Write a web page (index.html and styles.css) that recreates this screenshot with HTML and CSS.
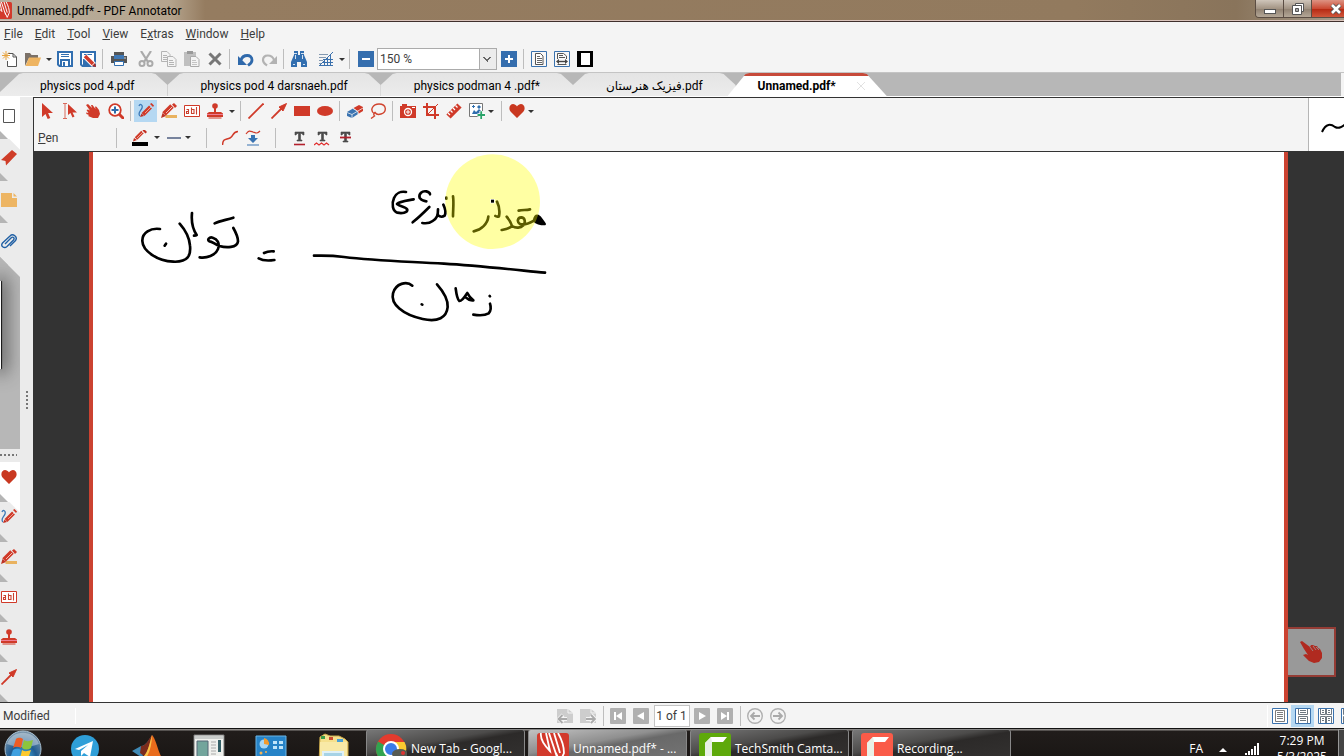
FILE: index.html
```html
<!DOCTYPE html>
<html lang="en">
<head>
<meta charset="utf-8">
<title>Unnamed.pdf* - PDF Annotator</title>
<link rel="stylesheet" href="styles.css">
</head>
<body>
<svg class="defs" aria-hidden="true">
  <symbol id="logo" viewBox="0 0 32 32"><rect width="32" height="32" rx="3" fill="#d23a2c"/><path d="M4 0c-1 6 2 11 9 18L9 0M12 0l8 24M17 0l6 20M19 20l4 9 4-9c0-6-2-13-6-20" fill="none" stroke="#fff" stroke-width="1.800"/></symbol>
  <symbol id="new" viewBox="0 0 16 16"><path d="M6 2.500h5l3.500 3.500v9.500h-9V10M11 2.500V6h3.500" fill="#fff" stroke="#555"/><path d="M4 0v9M0 4.500h8M1 1.500l6 6M7 1.500l-6 6" stroke="#e8a33c"/></symbol>
  <symbol id="open" viewBox="0 0 18 16"><path d="M1 15V2h5l1.500 2H14v3H5z" fill="#7b7168"/><path d="M5 6.500h12L14 15H1.500z" fill="#eeb461"/></symbol>
  <symbol id="save" viewBox="0 0 16 16"><path d="M1 1h14v14H2.500L1 13.500z" fill="#fff" stroke="#326fb0" stroke-width="2"/><path d="M3 8h10v8H3z" fill="#326fb0"/><path d="M4 3.500h8M4 5.500h8" stroke="#326fb0"/><path d="M5 10h6v5H5z" fill="#fff"/><path d="M6 11h2v4H6z" fill="#326fb0"/></symbol>
  <symbol id="saveas" viewBox="0 0 16 16"><path d="M1 1h14v14H2.500L1 13.500z" fill="#fff" stroke="#326fb0" stroke-width="2"/><path d="M3 8h4l3 4v3H3z" fill="#326fb0"/><path d="M4 3.500h8" stroke="#326fb0"/><path d="M5 5l9 9" stroke="#fff" stroke-width="5.500"/><path d="M5 5l8 8" stroke="#d03b2b" stroke-width="3.600"/><path d="M12 15l4 1-1-4z" fill="#b02a20"/></symbol>
  <symbol id="print" viewBox="0 0 16 16"><path d="M3 1h10v4H3z" fill="#555"/><path d="M0 5h16v7H0z" fill="#555"/><path d="M3 4h10v4H3z" fill="#3f78b5"/><path d="M3.500 10.500h9v4h-9z" fill="#fff" stroke="#326fb0"/><circle cx="14" cy="7" r=".7" fill="#fff"/></symbol>
  <symbol id="cut" viewBox="0 0 16 16"><path d="M3 0l7 11M13 0L6 11" stroke="#aaa" stroke-width="2.200"/><g fill="none" stroke="#aaa" stroke-width="2"><circle cx="4" cy="12.500" r="2.500"/><circle cx="12" cy="12.500" r="2.500"/></g></symbol>
  <symbol id="copy" viewBox="0 0 16 16"><g fill="#f4f4f4" stroke="#b4b4b4"><path d="M.5.500H6l3 3v7H.500zM2 4.500h4M2 6.500h5M2 8.500h5"/><path d="M6.500 5.500H12l3 3v7H6.500zM8 9.500h4M8 11.500h5M8 13.500h5"/></g></symbol>
  <symbol id="paste" viewBox="0 0 16 16"><path d="M0 1h12v14H0z" fill="#c0c0c0"/><path d="M3 0h6v3H3z" fill="#999"/><path d="M6.500 5.500H12l3 3v7H6.500z" fill="#f4f4f4" stroke="#aaa"/><path d="M8 9.500h4M8 11.500h5M8 13.500h5" stroke="#c4c4c4"/></symbol>
  <symbol id="del" viewBox="0 0 16 16"><path d="M2.500 2.500l11 11M13.500 2.500l-11 11" stroke="#777" stroke-width="3"/></symbol>
  <symbol id="undo" viewBox="0 0 16 16"><path d="M3 9c2-6 11-6 11 0 0 3-2 4-4 5.500" fill="none" stroke="#2f69ab" stroke-width="2.800"/><path d="M0 5v9h9z" fill="#2f69ab"/></symbol>
  <symbol id="redo" viewBox="0 0 16 16"><path d="M13 9C11 3 2 3 2 9c0 3 2 4 4 5.500" fill="none" stroke="#b3b3b3" stroke-width="2.200"/><path d="M16 5v8H8z" fill="#b3b3b3"/></symbol>
  <symbol id="find" viewBox="0 0 16 16"><path d="M3 0h4v4h2V0h4v4l3 7v5h-6v-5H6v5H0v-5l3-7z" fill="#326fb0"/><path d="M4.500 4v4M11.500 4v4M2 13.500h2M12 13.500h2M3 2.500h3M10 2.500h3" stroke="#fff" stroke-width=".8"/></symbol>
  <symbol id="grid" viewBox="0 0 16 16"><path d="M1 3.500h9M1 6.500h7M1 9.500h4M1 12.500h3" stroke="#8298b0"/><path d="M6.500 10v5M9.500 7v8M12.500 4v11M5 8.500h10M4 11.500h11M2 14.500h13M15 1L1 15" stroke="#3b71ad"/></symbol>
  <symbol id="minus" viewBox="0 0 16 16"><rect width="16" height="16" fill="#356eae"/><path d="M4 8h8" stroke="#fff" stroke-width="2"/></symbol>
  <symbol id="plus" viewBox="0 0 16 16"><rect width="16" height="16" fill="#356eae"/><path d="M4 8h8M8 4v8" stroke="#fff" stroke-width="2"/></symbol>
  <symbol id="page" viewBox="0 0 16 16"><path d="M.5.500h15v15H.500z" fill="#f8f8f8" stroke="#3a72ae"/><path d="M4.500 2.500h5l2.500 2.500v8.500H4.500z" fill="#fff" stroke="#555"/><path d="M6 5.500h3M6 7.500h5M6 9.500h5M6 11.500h5" stroke="#666"/></symbol>
  <symbol id="pagew" viewBox="0 0 16 16"><path d="M.5.500h15v15H.500z" fill="#f8f8f8" stroke="#3a72ae"/><path d="M3.500 8V2.500h6l3 2.500V8M5 4.500h4M5 6.500h6M3.500 13.500h9" fill="none" stroke="#555"/><path d="M4 10.500h8" stroke="#444" stroke-width="1.400"/><path d="M2 10.500L5 8v5zM14 10.500L11 8v5z" fill="#444"/></symbol>
  <symbol id="full" viewBox="0 0 16 16"><rect width="16" height="16" fill="#000"/><rect x="4" y="2" width="9" height="12" fill="#fff"/></symbol>
  <symbol id="select" viewBox="0 0 16 16"><path d="M3 0v14l3.500-3 2.200 5 2.600-1-2.200-5H14z" fill="#d03a29"/></symbol>
  <symbol id="seltext" viewBox="0 0 16 16"><path d="M1 .500h4M1 15.500h4M3 1v14" stroke="#d86a5c" fill="none"/><path d="M6 1v11l2.500-2 2 4.500 2-1-2-4H15z" fill="#d03a29"/></symbol>
  <symbol id="hand" viewBox="0 0 16 16"><path d="M1 2l2-1 4 4-1-3h1.500l3 4-.5-2.500 1.500.200L14 7l1 4-2 4H8L3 13l1-1-2.500-1L1 9.500 3.500 10 1.500 7 3 6.500l2 1z" fill="#d03a29"/></symbol>
  <symbol id="zoom" viewBox="0 0 16 16"><circle cx="7" cy="7" r="5.800" fill="#fff" stroke="#d03a29" stroke-width="1.800"/><path d="M11 11l5 5" stroke="#d03a29" stroke-width="3"/><path d="M3.500 7h7M7 3.500v7" stroke="#2e6baa" stroke-width="2"/></symbol>
  <symbol id="pen" viewBox="0 0 16 16"><path d="M1 3C2 0 5 2 4 5S-1 10 2 13" fill="none" stroke="#3b79b8" stroke-width="1.300"/><path d="M5 11.500L12.500 4" stroke="#d03a29" stroke-width="4"/><path d="M12 1l1.500-1L16 2.500 15 4z" fill="#d03a29"/><path d="M3.500 10.500L2 14l4-1z" fill="#c22e20"/><path d="M7 10l6-6" stroke="#f0b9ad" stroke-width=".8"/></symbol>
  <symbol id="marker" viewBox="0 0 16 16"><path d="M4.500 15v-3H16v3z" fill="#e9b25f"/><path d="M3 11L11 3" stroke="#d03a29" stroke-width="5"/><path d="M11 1.500L13 0l3 3-2 2z" fill="#d03a29"/><path d="M1.500 10L0 15l5-2z" fill="#be3325"/><path d="M5 10l6-6" stroke="#f0c0b6"/></symbol>
  <symbol id="abl" viewBox="0 0 16 16"><path d="M.5 2.500h15v11H.500z" fill="#fff" stroke="#d03a29"/><path d="M2.500 6.500h2v4h-2v-2h2M7.500 4.500v6h2.500v-4H7.500M12.500 4v7.500" fill="none" stroke="#c9412f" stroke-width="1.100"/></symbol>
  <symbol id="stamp" viewBox="0 0 16 16"><circle cx="8" cy="3" r="2.800" fill="#d03a29"/><path d="M7 5h2v4h5l2 1.500V14H0v-3.500L2 9h5z" fill="#d03a29"/><path d="M0 11.500h16" stroke="#ee7d94"/><path d="M1.500 15h13" stroke="#d03a29"/></symbol>
  <symbol id="line" viewBox="0 0 16 16"><path d="M.5 15.500l15-15" stroke="#d03a29" stroke-width="1.800"/></symbol>
  <symbol id="arrow" viewBox="0 0 16 16"><path d="M.5 15.500L12 4" stroke="#d03a29" stroke-width="1.800"/><path d="M15.500.500L8 4l4 4z" fill="#d03a29" stroke="#d03a29"/></symbol>
  <symbol id="rect" viewBox="0 0 16 16"><rect y="3" width="16" height="10" fill="#d03a29"/></symbol>
  <symbol id="ell" viewBox="0 0 16 16"><ellipse cx="8" cy="8" rx="8" ry="5" fill="#d03a29"/></symbol>
  <symbol id="eraser" viewBox="0 0 16 16"><path d="M0 9l6-3.500 5 3V11l-6 4-5-2z" fill="#3a73b1"/><path d="M6.500 5L12 2l4 2v4l-4.500 2.700-.5-2.200z" fill="#d03a29"/><path d="M0 9.500l5 2 11-6.500M6 5.500l5 3v2.500M5 11.500V15" fill="none" stroke="#f3f3f3" stroke-width=".8"/></symbol>
  <symbol id="lasso" viewBox="0 0 16 16"><path d="M4.500 11C-1 7 3 1 9 1c8 0 8 8 2 10-3 1-5 0-6-1.500-2 1-1 3-.500 3.500L1 15.500" fill="none" stroke="#d0442f" stroke-width="1.400"/></symbol>
  <symbol id="camera" viewBox="0 0 16 16"><path d="M0 3h2V1h5v2h9v12H0z" fill="#d03a29"/><circle cx="8" cy="9" r="3.500" fill="#d03a29" stroke="#fff" stroke-width="1.300"/><path d="M8 7v4M6 9h4M12 4.500h3" stroke="#fff"/></symbol>
  <symbol id="crop" viewBox="0 0 16 16"><path d="M4 0v12h12M0 4h12v12" fill="none" stroke="#d03a29" stroke-width="2"/><path d="M5 11L15 1" stroke="#d03a29"/></symbol>
  <symbol id="ruler" viewBox="0 0 16 16"><path d="M2.500 13.500l11-11" stroke="#d03a29" stroke-width="6"/><path d="M2 10l2 2M4.500 7.500l2 2M7 5l2 2M9.500 2.500l2 2" stroke="#fff" stroke-width="1.200"/></symbol>
  <symbol id="addimg" viewBox="0 0 16 16"><path d="M1 .500h12.500v13H.500V.500z" fill="#fff" stroke="#777"/><path d="M3 11l2-4 2 2 3-3 2 2v3z" fill="#2f6eae"/><path d="M3 3.500h3M4.500 2v3M9 3h2v2H9z" stroke="#2f6eae" fill="#2f6eae"/><path d="M8.500 12h7.500M12.200 8v8" stroke="#fff" stroke-width="3.500"/><path d="M8.500 12H16M12.200 8.300V16" stroke="#2ba36a" stroke-width="1.800"/></symbol>
  <symbol id="heart" viewBox="0 0 16 16"><path d="M8 15L1.500 8.500C-1 5 1 1 4.200 1 6.500 1 8 3.500 8 3.500S9.500 1 11.800 1C15 1 17 5 14.500 8.500z" fill="#c93820"/></symbol>
  <symbol id="pencolor" viewBox="0 0 16 16"><path d="M4 8.500l6.500-6.500" stroke="#d03a29" stroke-width="3.600"/><path d="M2 8L1 11.500l4-1.500zM10.500.500L12-1l3 3-1.500 1.500z" fill="#c22e20"/><path d="M5 8l6-6" stroke="#f0b9ad" stroke-width=".8"/><rect y="12" width="16" height="4" fill="#000"/></symbol>
  <symbol id="dash" viewBox="0 0 16 16"><path d="M1 8h14" stroke="#34466e" stroke-width="1.300"/></symbol>
  <symbol id="curve" viewBox="0 0 16 16"><path d="M.5 15C1 8 4 10 8 8s2-6 8-6.500" fill="none" stroke="#d03a29" stroke-width="1.500"/></symbol>
  <symbol id="press" viewBox="0 0 16 16"><path d="M1 4c3-4 4-3 7-2s4 2 7-1" fill="none" stroke="#d03a29" stroke-width="1.200"/><path d="M6 5h4v3h3l-5 5-5-5h3z" fill="#3972b1"/><path d="M2 15h12" stroke="#3972b1"/></symbol>
  <symbol id="tu" viewBox="0 0 16 16"><path d="M4 5V2h9v3h-1l-1-1.500H9.500V10H11v1H6v-1h1.500V3.500H6L5 5z" fill="#4a4a4a" stroke="#4a4a4a" stroke-width=".6"/><path d="M3 14.500h11" stroke="#b3202c" stroke-width="1.600"/></symbol>
  <symbol id="tw" viewBox="0 0 16 16"><path d="M4 5V2h9v3h-1l-1-1.500H9.500V10H11v1H6v-1h1.500V3.500H6L5 5z" fill="#4a4a4a" stroke="#4a4a4a" stroke-width=".6"/><path d="M0 15l2.500-2L5 15l2.500-2 2.500 2 2.500-2 2.500 2" fill="none" stroke="#e02d2d" stroke-width="1.200"/></symbol>
  <symbol id="ts" viewBox="0 0 16 16"><path d="M4 5V2h9v3h-1l-1-1.500H9.500V11H11v1H6v-1h1.500V3.500H6L5 5z" fill="#4a4a4a" stroke="#4a4a4a" stroke-width=".6"/><path d="M3 7.500h11" stroke="#b3202c" stroke-width="1.800"/></symbol>
  <symbol id="sheet" viewBox="0 0 16 16"><path d="M2.500 1.500h11v13h-11z" fill="#fff" stroke="#555"/></symbol>
  <symbol id="bookmark" viewBox="0 0 16 16"><path d="M0 10L11 0l5 4L5 15.500 4.500 11z" fill="#cf3d28"/></symbol>
  <symbol id="note" viewBox="0 0 16 16"><path d="M0 1h11v5h5v9H0z" fill="#edb563"/><path d="M12.500 1L16 4.500h-3.500z" fill="#edb563"/></symbol>
  <symbol id="clip" viewBox="0 0 16 16"><path d="M4 10l6-6c2-2 4 0 2.500 2L6 12.500C3 15-1 12 1.500 9L9 2c3-3 8 1 5.500 4.500L9 12" fill="none" stroke="#2160a4" stroke-width="1.400"/></symbol>
  <symbol id="docl" viewBox="0 0 16 16"><path d="M0 1h11l5 4v10H0z" fill="#cdcdcd"/><path d="M11 1v4h5" fill="none" stroke="#f4f4f4"/><path d="M2 11h8M6 7l-4 4 4 4" fill="none" stroke="#f4f4f4" stroke-width="4"/><path d="M1 11h9M5.500 7l-4 4 4 4" fill="none" stroke="#aaa" stroke-width="1.800"/></symbol>
  <symbol id="docr" viewBox="0 0 16 16"><path d="M0 1h11l5 4v10H0z" fill="#cdcdcd"/><path d="M11 1v4h5" fill="none" stroke="#f4f4f4"/><path d="M6 11h8M11 7l4 4-4 4" fill="none" stroke="#f4f4f4" stroke-width="4"/><path d="M6 11h9M11 7l4 4-4 4" fill="none" stroke="#aaa" stroke-width="1.800"/></symbol>
  <symbol id="first" viewBox="0 0 16 16"><rect width="16" height="16" rx="1" fill="#b0b0b0"/><path d="M4 4h2v8H4zM12 4v8L6 8z" fill="#fff"/></symbol>
  <symbol id="prev" viewBox="0 0 16 16"><rect width="16" height="16" rx="1" fill="#b0b0b0"/><path d="M11 4v8L4 8z" fill="#fff"/></symbol>
  <symbol id="next" viewBox="0 0 16 16"><rect width="16" height="16" rx="1" fill="#b0b0b0"/><path d="M5 4v8l7-4z" fill="#fff"/></symbol>
  <symbol id="last" viewBox="0 0 16 16"><rect width="16" height="16" rx="1" fill="#b0b0b0"/><path d="M10 4h2v8h-2zM4 4v8l6-4z" fill="#fff"/></symbol>
  <symbol id="back" viewBox="0 0 16 16"><circle cx="8" cy="8" r="7.300" fill="none" stroke="#b0b0b0" stroke-width="1.400"/><path d="M4 8h9M7.500 4.500L4 8l3.500 3.500" fill="none" stroke="#aaa" stroke-width="1.800"/></symbol>
  <symbol id="fwd" viewBox="0 0 16 16"><circle cx="8" cy="8" r="7.300" fill="none" stroke="#b0b0b0" stroke-width="1.400"/><path d="M3 8h9M8.500 4.500L12 8l-3.500 3.500" fill="none" stroke="#aaa" stroke-width="1.800"/></symbol>
  <symbol id="vpage" viewBox="0 0 16 16"><path d="M.5.500h15v15H.500z" fill="#fff" stroke="#3a72ae"/><path d="M3.500 2.500h9v11h-9zM5 4.500h6M5 6.500h6M5 8.500h6M5 10.500h6" fill="none" stroke="#7d7d7d"/></symbol>
  <symbol id="vcont" viewBox="0 0 16 16"><path d="M.5.500h15v15H.500z" fill="#fff" stroke="#3a72ae"/><path d="M3.500 1v5.500h9V1M5 2.500h6M5 4.500h6M3.500 15V8.500h9V15M5 10.500h6M5 12.500h6" fill="none" stroke="#6d7780"/></symbol>
  <symbol id="vtwo" viewBox="0 0 16 16"><path d="M.5.500h15v15H.500z" fill="#fff" stroke="#3a72ae"/><path d="M2.500 1v5.500h5V1M8.500 1v5.500h5V1M4 2.500h2M4 4.500h2M10 2.500h2M10 4.500h2M2.500 15V8.500h5V15M8.500 15V8.500h5V15M4 10.500h2M4 12.500h2M10 10.500h2M10 12.500h2" fill="none" stroke="#6d7780"/></symbol>
  <symbol id="camtasia" viewBox="0 0 32 32"><path d="M12 4h16l-4 5H13v15h11l4 5H6V10z" fill="#fff"/><path d="M6 10l6-6 1 5v15l-7 3z" fill="#e9f0e6"/></symbol>
  <symbol id="point" viewBox="0 0 24 24"><path d="M1 2l2-1 8 6 1-2 2 0 2 1 2 0 1 2 2 1 2 4 0 5-3 4-5 1-5-2-6-6 3-1 2 1-4-6z" fill="#b02a20"/><path d="M11 7l3 4M14 6l3 4M17 7l3 3" stroke="#999" stroke-width=".8"/></symbol>
</svg>

<header class="titlebar">
  <svg class="app-icon"><use href="#logo"/></svg>
  <h1 class="title">Unnamed.pdf* - PDF Annotator</h1>
  <div class="winctl">
    <button class="wbtn" aria-label="Minimize"><svg viewBox="0 0 14 12"><rect x="1.500" y="6.500" width="11" height="4" fill="#fff" stroke="#555"/></svg></button>
    <button class="wbtn" aria-label="Restore"><svg viewBox="0 0 14 12"><path d="M4.500.500h8v8h-8z" fill="#fff" stroke="#555"/><path d="M1.500 2.500h9v9h-9z" fill="#fff" stroke="#555"/><path d="M4.500 5.500h3v3h-3z" fill="#aaa" stroke="#555"/></svg></button>
    <button class="wbtn close" aria-label="Close"><svg viewBox="0 0 14 12"><path d="M3 2l8 8M11 2l-8 8" stroke="#555" stroke-width="4.500"/><path d="M3 2l8 8M11 2l-8 8" stroke="#fff" stroke-width="2.600"/></svg></button>
  </div>
</header>

<nav class="menubar">
  <button><u>F</u>ile</button><button><u>E</u>dit</button><button><u>T</u>ool</button><button><u>V</u>iew</button><button>E<u>x</u>tras</button><button><u>W</u>indow</button><button><u>H</u>elp</button>
</nav>

<div class="toolbar main-tools">
  <button class="ib" aria-label="New"><svg><use href="#new"/></svg></button>
  <button class="ib" aria-label="Open"><svg class="wide"><use href="#open"/></svg></button>
  <button class="caret" aria-label="Recent files"></button>
  <button class="ib" aria-label="Save"><svg><use href="#save"/></svg></button>
  <button class="ib" aria-label="Save as"><svg><use href="#saveas"/></svg></button>
  <i class="sep"></i>
  <button class="ib" aria-label="Print"><svg><use href="#print"/></svg></button>
  <i class="gap"></i>
  <button class="ib" aria-label="Cut"><svg><use href="#cut"/></svg></button>
  <button class="ib" aria-label="Copy"><svg><use href="#copy"/></svg></button>
  <button class="ib" aria-label="Paste"><svg><use href="#paste"/></svg></button>
  <button class="ib" aria-label="Delete"><svg><use href="#del"/></svg></button>
  <i class="sep"></i>
  <button class="ib" aria-label="Undo"><svg><use href="#undo"/></svg></button>
  <button class="ib" aria-label="Redo"><svg><use href="#redo"/></svg></button>
  <i class="sep tight"></i>
  <button class="ib" aria-label="Find"><svg><use href="#find"/></svg></button>
  <i class="gap"></i>
  <button class="ib" aria-label="Grid"><svg><use href="#grid"/></svg></button>
  <button class="caret" aria-label="Grid options"></button>
  <i class="sep"></i>
  <button class="ib" aria-label="Zoom out"><svg><use href="#minus"/></svg></button>
  <select class="zoombox" aria-label="Zoom"><option>150 %</option></select>
  <button class="ib" aria-label="Zoom in"><svg><use href="#plus"/></svg></button>
  <i class="sep tight"></i>
  <button class="ib" aria-label="Full page"><svg><use href="#page"/></svg></button>
  <button class="ib" aria-label="Page width"><svg><use href="#pagew"/></svg></button>
  <button class="ib" aria-label="Full screen"><svg><use href="#full"/></svg></button>
</div>

<div class="tabs" role="tablist">
  <button class="tab" role="tab">physics pod 4.pdf</button>
  <button class="tab" role="tab">physics pod 4 darsnaeh.pdf</button>
  <button class="tab" role="tab">physics podman 4 .pdf*</button>
  <button class="tab" role="tab"><bdi dir="rtl">فیزیک هنرستان</bdi>.pdf</button>
  <button class="tab active" role="tab" aria-selected="true">Unnamed.pdf*<svg class="tabx" viewBox="0 0 8 8"><path d="M0 0l8 8M8 0L0 8" stroke="#e2e2e2"/></svg></button>
  <i class="tab-end"></i>
</div>

<div class="workspace">
  <aside class="sidebar">
    <div class="strip tall">
      <button class="side on" aria-label="Pages"><svg><use href="#sheet"/></svg></button>
      <button class="side" aria-label="Bookmarks"><svg><use href="#bookmark"/></svg></button>
      <button class="side" aria-label="Notes"><svg><use href="#note"/></svg></button>
      <button class="side" aria-label="Attachments"><svg><use href="#clip"/></svg></button>
    </div>
    <div class="panel"><i class="thumb"></i></div>
    <i class="grip-h"></i>
    <div class="strip">
      <button class="side on" aria-label="Favorites"><svg><use href="#heart"/></svg></button>
      <button class="side" aria-label="Pens"><svg><use href="#pen"/></svg></button>
      <button class="side" aria-label="Markers"><svg><use href="#marker"/></svg></button>
      <button class="side" aria-label="Text boxes"><svg><use href="#abl"/></svg></button>
      <button class="side" aria-label="Stamps"><svg><use href="#stamp"/></svg></button>
      <button class="side" aria-label="Arrows"><svg><use href="#arrow"/></svg></button>
    </div>
    <i class="grip-v"></i>
  </aside>

  <main class="editor">
    <div class="toolbox">
      <div class="toolrows">
        <div class="toolbar">
          <button class="ib" aria-label="Select"><svg><use href="#select"/></svg></button>
          <button class="ib" aria-label="Select text"><svg><use href="#seltext"/></svg></button>
          <button class="ib" aria-label="Pan"><svg><use href="#hand"/></svg></button>
          <button class="ib" aria-label="Zoom tool"><svg><use href="#zoom"/></svg></button>
          <i class="sep"></i>
          <button class="ib on" aria-label="Pen"><svg><use href="#pen"/></svg></button>
          <button class="ib" aria-label="Marker"><svg><use href="#marker"/></svg></button>
          <button class="ib" aria-label="Text box"><svg><use href="#abl"/></svg></button>
          <button class="ib" aria-label="Stamp"><svg><use href="#stamp"/></svg></button>
          <button class="caret" aria-label="Stamp options"></button>
          <i class="sep"></i>
          <button class="ib" aria-label="Line"><svg><use href="#line"/></svg></button>
          <button class="ib" aria-label="Arrow"><svg><use href="#arrow"/></svg></button>
          <button class="ib" aria-label="Rectangle"><svg><use href="#rect"/></svg></button>
          <button class="ib" aria-label="Ellipse"><svg><use href="#ell"/></svg></button>
          <i class="sep"></i>
          <button class="ib" aria-label="Eraser"><svg><use href="#eraser"/></svg></button>
          <button class="ib" aria-label="Lasso"><svg><use href="#lasso"/></svg></button>
          <i class="sep"></i>
          <button class="ib" aria-label="Snapshot"><svg><use href="#camera"/></svg></button>
          <button class="ib" aria-label="Crop"><svg><use href="#crop"/></svg></button>
          <button class="ib" aria-label="Measure"><svg><use href="#ruler"/></svg></button>
          <button class="ib" aria-label="Insert image"><svg><use href="#addimg"/></svg></button>
          <button class="caret near" aria-label="Image options"></button>
          <i class="gap"></i>
          <i class="sep"></i>
          <button class="ib" aria-label="Favorites"><svg><use href="#heart"/></svg></button>
          <button class="caret near" aria-label="Favorite options"></button>
        </div>
        <div class="toolbar props">
          <span class="toolname"><u>P</u>en</span>
          <i class="sep"></i>
          <i class="gap"></i>
          <button class="ib" aria-label="Color"><svg><use href="#pencolor"/></svg></button>
          <button class="caret" aria-label="Color options"></button>
          <button class="ib" aria-label="Line style"><svg><use href="#dash"/></svg></button>
          <button class="caret near" aria-label="Line options"></button>
          <i class="gap wide"></i><i class="sep"></i><i class="gap"></i>
          <button class="ib" aria-label="Smooth"><svg><use href="#curve"/></svg></button>
          <button class="ib" aria-label="Pressure"><svg><use href="#press"/></svg></button>
          <i class="gap"></i><i class="sep"></i><i class="gap"></i>
          <button class="ib" aria-label="Underline"><svg><use href="#tu"/></svg></button>
          <button class="ib" aria-label="Squiggle"><svg><use href="#tw"/></svg></button>
          <button class="ib" aria-label="Strike through"><svg><use href="#ts"/></svg></button>
        </div>
      </div>
      <div class="preview"><svg viewBox="0 0 35 53"><path d="M13 34c4-9 9-8 13-5 4 2 7 0 12-4" fill="none" stroke="#000" stroke-width="2"/></svg></div>
    </div>

    <div class="canvas">
      <div class="page">
        <svg class="ink" viewBox="0 0 1350 570" role="img" aria-label="توان = مقدار انرژی / زمان">
          <g fill="none" stroke="#000" stroke-width="8" stroke-linecap="round" stroke-linejoin="round">
            <path d="M120 237C92 233 66 248 67 273c1 30 45 60 93 62 45 2 53-20 50-48-2-25-15-48-31-66M138 281l-4 6"/>
            <path d="M216 189c-2 20 2 48 14 66-2 2-5 2-8 2M284 220c18-9 36-10 56-17M340 234c8 14 14 28 14 40-2 20-36 20-56 14-12-4-22-14-30-14-8-4 0-14 10-11 14 4 22 16 16 34-8 20-34 28-55 25"/>
            <path d="M432 309c8-4 17-6 29-5M416 325c10 6 27 8 47 5"/>
            <path d="M582 317c35-1 61 0 90 4 90 11 180 13 300 20 100 6 200 17 303 27"/>
            <path d="M858 126c-16-3-30 4-36 18-8 18-4 40 10 44 14 3 30 0 30-8-1-10-20-8-31-18 8-8 30-10 50-14"/>
            <path d="M899 144c-4-14 8-22 20-20 8 2 11 6 11 9M899 144c6 7 14 10 20 10M928 171c-14 14-30 30-50 46M954 178c0 18-2 26-16 35-8 6-18 8-31 6M979 143l0 3M970 164c6 12 8 24 4 33-6 4-14 4-20-1M999 139c3 18 0 40 0 60"/>
            <path d="M1131 155c6 12 9 28 6 44-4 1-8 1-11-1M1105 200c-2 21-21 40-44 44M1160 200c10 12 14 20 16 28-8 8-20 10-31 12M1176 228c12 8 26 6 34-2 8-10 4-24-6-24-12 1-14 14-4 20 12 4 28-2 42-10M1196 182c12-3 22-1 34-4"/>
            <path d="M1242 212c2-12 6-16 12-14 8 4 12 14 20 24-12 0-24-3-32-10z" fill="#000"/>
            <path d="M877 407c-17-15-50-7-58 23-8 32 29 64 89 77 46 10 72-4 75-36 2-27-17-51-32-68M905 463l2 1"/>
            <path d="M1007 415c2 16 4 32 11 38 8 2 16-12 24-24 4 8 10 16 18 22-8 1-16-2-22-8M1109 438l1 1M1110 461c4 12 4 20-4 29-10 6-28 7-46 4"/>
          </g>
          <circle class="spot" cx="1118" cy="155" r="142"/>
          <rect x="1111" y="147" width="13" height="13" fill="#fff"/>
          <rect x="1113" y="149" width="9" height="9"/>
        </svg>
      </div>
      <button class="touch" aria-label="Pan by touch"><svg><use href="#point"/></svg></button>
    </div>
  </main>
</div>

<footer class="status">
  <span class="state">Modified</span>
  <div class="pager">
    <button class="ib" aria-label="Previous document"><svg><use href="#docl"/></svg></button>
    <button class="ib" aria-label="Next document"><svg><use href="#docr"/></svg></button>
    <i class="sep"></i>
    <button class="ib" aria-label="First page"><svg><use href="#first"/></svg></button>
    <button class="ib" aria-label="Previous page"><svg><use href="#prev"/></svg></button>
    <input class="pageno" aria-label="Page" value="1 of 1">
    <button class="ib" aria-label="Next page"><svg><use href="#next"/></svg></button>
    <button class="ib" aria-label="Last page"><svg><use href="#last"/></svg></button>
    <i class="sep"></i>
    <button class="ib" aria-label="Back"><svg><use href="#back"/></svg></button>
    <button class="ib" aria-label="Forward"><svg><use href="#fwd"/></svg></button>
  </div>
  <div class="views">
    <button class="ib" aria-label="Single page"><svg><use href="#vpage"/></svg></button>
    <button class="ib on" aria-label="Continuous"><svg><use href="#vcont"/></svg></button>
    <button class="ib" aria-label="Two pages"><svg><use href="#vtwo"/></svg></button>
    <button class="ib" aria-label="Two pages continuous"><svg><use href="#vtwo"/></svg></button>
  </div>
</footer>

<div class="taskbar">
  <div class="bar">
    <button class="launch orb" aria-label="Start"><svg viewBox="0 0 38 38"><defs><radialGradient id="og" cx=".5" cy=".75" r=".75"><stop offset="0" stop-color="#4bc0f2"/><stop offset=".5" stop-color="#205c92"/><stop offset="1" stop-color="#7f98ab"/></radialGradient></defs><circle cx="19" cy="19" r="18" fill="url(#og)" stroke="#a9c1d2"/><path d="M3 14c5-15 27-15 32 0-10 4-22 4-32 0z" fill="#dfe9f0" opacity=".45"/><path d="M12 9c3-2 5-1 7 0l-2 9c-3-2-6-1-8 0z" fill="#ee5b23"/><path d="M20 10c3 2 6 1 9 0l-2 8c-3 2-6 2-9 0z" fill="#8cc43c"/><path d="M9 20c3-2 6-1 8 0l-3 9c-2-2-5-2-8 0z" fill="#3fa0e0"/><path d="M18 20c3 2 6 1 9 0l-3 9c-3 2-6 1-8 0z" fill="#fcc92d"/></svg></button>
    <button class="launch" aria-label="Telegram"><svg viewBox="0 0 32 32"><circle cx="16" cy="16" r="14" fill="#2f9fd8"/><path d="M6 16l18-8-3 16-6-4-3 3v-5l7-6-9 5z" fill="#fff"/></svg></button>
    <button class="launch" aria-label="MATLAB"><svg viewBox="0 0 32 32"><path d="M1 18l9-5c5 0 7-6 12-11l-7 18-5 4z" fill="#3f8ab5"/><path d="M10 13c5 0 7-6 11-11 1 4-5 18-8 21l-4-3z" fill="#7c2b1c"/><path d="M21 2c4 4 6 17 11 25-4-3-6-5-9-2l-7 6-4-7c5-4 7-15 9-22z" fill="#e96c1c"/><path d="M21 2c0 9-2 17-6 23l-3-1c5-4 7-15 9-22z" fill="#f9c14a"/></svg></button>
    <button class="launch" aria-label="Viewer"><svg viewBox="0 0 32 32"><path d="M1 2h30v30H1z" fill="#f0f1ed" stroke="#777"/><path d="M2 3h28v3H2z" fill="#c9ccca"/><path d="M4 8h11v18H4z" fill="#72a59c" stroke="#567"/><path d="M18 9h5M18 12h5M18 15h5M18 18h5M18 21h5" stroke="#aaa"/><path d="M25 7h3v12h-3z" fill="#335f66"/></svg></button>
    <button class="launch" aria-label="Control panel"><svg viewBox="0 0 32 32"><path d="M1 3h30v29H1z" fill="#2683c7" stroke="#6ab5e5"/><circle cx="9" cy="11" r="4.500" fill="#a8d7f4"/><path d="M9 11V5a6 6 0 0 1 5 7z" fill="#f29b2d"/><path d="M18 8h4v3h-4zM24 8h4v3h-4zM18 13h4v3h-4zM24 13h4v3h-4zM12 24h16v2H12z" fill="#bfe5fa"/><circle cx="6" cy="20" r="1.500" fill="#f4b355"/><circle cx="11" cy="19" r="1" fill="#f4b355"/></svg></button>
    <button class="launch" aria-label="Explorer"><svg viewBox="0 0 32 32"><path d="M3 4l5-3 5 2h9l6 3 3 3v23H2z" fill="#f5e08c" stroke="#caa94b"/><path d="M3 9h27v23H3z" fill="#f8e9a6"/><path d="M4 3h4v3H4z" fill="#3b9b48"/><path d="M12 4h4v3h-4z" fill="#c94b30"/><path d="M20 6h6v3h-6z" fill="#49a0d7"/><path d="M6 19h20v13H6z" fill="#a7d3e6" stroke="#dff1f7" stroke-width="2"/></svg></button>
    <div class="tasks">
      <button class="task"><svg viewBox="0 0 32 32"><circle cx="16" cy="16" r="15" fill="#e33b2e"/><path d="M16 16L3 8.500A15 15 0 0 0 16 31z" fill="#31a350"/><path d="M16 16h15A15 15 0 0 1 16 31z" fill="#fccb30"/><path d="M16 9h13.500a15 15 0 0 1 0 14L16 31z" fill="#fccb30"/><circle cx="16" cy="16" r="7" fill="#3b7ce8" stroke="#fff" stroke-width="2"/><ellipse cx="25" cy="21" rx="8" ry="5" fill="#565a52"/><circle cx="28" cy="20" r="2" fill="#d33"/></svg><span>New Tab - Googl...</span></button>
      <button class="task current"><svg viewBox="0 0 32 32"><use href="#logo"/></svg><span>Unnamed.pdf* - ...</span></button>
      <button class="task"><svg class="green" viewBox="0 0 32 32"><use href="#camtasia"/></svg><span>TechSmith Camta...</span></button>
      <button class="task"><svg class="coral" viewBox="0 0 32 32"><use href="#camtasia"/></svg><span>Recording...</span></button>
    </div>
    <div class="tray">
      <span class="lang">FA</span>
      <svg class="up" viewBox="0 0 8 5"><path d="M0 5l4-4 4 4z" fill="#fff"/></svg>
      <svg class="signal" viewBox="0 0 16 12"><path d="M1 10h2v2H1zM4 8h2v4H4zM7 6h2v6H7zM10 3h2v9h-2zM13 0h2v12h-2z" fill="#fff"/></svg>
      <time class="clock">7:29 PM<br>5/3/2025</time>
      <i class="desk"></i>
    </div>
  </div>
</div>
</body>
</html>
```
FILE: styles.css
```css
* { box-sizing: border-box; }

body {
  margin: 0;
  height: 100vh;
  overflow: hidden;
  display: flex;
  flex-direction: column;
  background: #f4f4f4;
  color: #3c3c3c;
  font: 12px/16px Roboto, "Noto Sans", "DejaVu Sans", sans-serif;
}

button, input, select { font: inherit; color: inherit; }
button { border: 0; padding: 0; background: none; }
.defs { position: absolute; width: 0; height: 0; }

/* Title bar */
.titlebar {
  flex: none;
  height: 22px;
  display: flex;
  align-items: center;
  gap: 5px;
  overflow: hidden;
  border-bottom: 1px solid #40302c;
  box-shadow: inset 0 -1px #d9c3bb;
  background: linear-gradient(90deg, #b8b0a0 0, #b5a48d 170px, #957c60 205px, #927a5e 80%, #89745b 92%, #a79c8c 100%);
}
.app-icon { width: 17px; height: 17px; margin-left: -5px; }
.title { margin: 0; font-size: 12px; font-weight: 400; color: #000; flex: 1; }
.winctl { display: flex; align-self: flex-start; margin-right: -17px; border: 1px solid #5b4d43; border-top: 0; border-radius: 0 0 4px 4px; overflow: hidden; }
.wbtn { width: 28px; height: 17px; display: grid; place-items: center; border-right: 1px solid #5b4d43; background: linear-gradient(#cfc5ba, #a39484 50%, #8f8070 51%, #b4a797); }
.wbtn svg { width: 14px; height: 12px; }
.wbtn.close { width: 48px; background: linear-gradient(#dd9383, #cb4a34 50%, #b42711 51%, #d0573b); }

/* Menu */
.menubar { flex: none; height: 24px; display: flex; align-items: center; gap: 12px; padding-left: 4px; }

/* Toolbars */
.toolbar { display: flex; align-items: center; height: 26px; }
.main-tools { flex: none; margin-left: -2px; }
.ib { flex: none; width: 23px; height: 22px; display: grid; place-items: center; }
.ib svg { width: 16px; height: 16px; }
.ib svg.wide { width: 18px; }
.ib.on { background: #b5d8f2; }
.sep { flex: none; width: 7px; height: 20px; background: linear-gradient(90deg, transparent 3px, #bdbdbd 3px, #bdbdbd 4px, transparent 4px); }
.main-tools .sep { width: 8px; }
.main-tools .sep.tight { width: 7px; }
.gap { flex: none; width: 4px; }
.props .gap { width: 8px; }
.props .gap.wide { width: 12px; }
.caret { flex: none; width: 11px; height: 20px; display: grid; place-items: center; }
.caret.near { width: 6px; }
.caret::before { content: ""; border: 3px solid transparent; border-top-color: #333; border-bottom: 0; }
.main-tools .caret { width: 9px; }
.zoombox {
  width: 120px;
  height: 22px;
  padding: 0 2px;
  border: 1px solid #ababab;
  border-radius: 0;
  appearance: none;
  background:
    linear-gradient(45deg, transparent 50%, #666 50%, #666 70%, transparent 70%) right 8px top 8px / 5px 5px no-repeat,
    linear-gradient(-45deg, transparent 50%, #666 50%, #666 70%, transparent 70%) right 4px top 8px / 5px 5px no-repeat,
    linear-gradient(#ababab, #ababab) right 16px top 0 / 1px 100% no-repeat,
    linear-gradient(#ececec, #ececec) right 0 top 0 / 16px 100% no-repeat,
    #fff;
}

/* Document tabs */
.tabs {
  flex: none;
  height: 25px;
  display: flex;
  border-top: 1px solid #c4c4c4;
  border-bottom: 1px solid #fff;
  background: #b7b7b7;
}
.tab {
  padding: 2px 33px 0;
  display: flex;
  align-items: center;
  white-space: nowrap;
  color: #000;
  background: linear-gradient(#e4e4e4, #ececec);
  clip-path: polygon(0 12px, 12px 1px, 16px 0, calc(100% - 16px) 0, calc(100% - 12px) 1px, 100% 12px, 100% 100%, 0 100%);
}
.tab:first-child { padding-left: 40px; clip-path: polygon(0 19px, 19px 1px, 23px 0, calc(100% - 16px) 0, calc(100% - 12px) 1px, 100% 12px, 100% 100%, 0 100%); }
.tab.active {
  margin-left: -8px;
  padding: 2px 22px 0 30px;
  gap: 21px;
  font-weight: 700;
  background: linear-gradient(#c74a3a 3px, #fff 3px);
  clip-path: polygon(0 100%, 18px 1px, 22px 0, calc(100% - 24px) 0, calc(100% - 20px) 1px, 100% 100%);
}
.tabx { width: 8px; height: 8px; }
.tab-end { width: 3px; margin-left: auto; background: #f4f4f4; }

/* Sidebar */
.workspace { flex: 1; min-height: 0; display: flex; }
.sidebar { position: relative; flex: none; width: 33px; display: flex; flex-direction: column; background: #ebebeb; }
.strip { width: 20px; display: flex; flex-direction: column; background: linear-gradient(90deg, #b5b5b5, #b5b5b5 8px, #ebebeb 8px); }
.side {
  width: 20px;
  height: 40px;
  padding: 7px 0 0 1px;
  display: flex;
  align-items: flex-start;
  background: #ebebeb;
  clip-path: polygon(0 0, 20px 0, 20px 100%, 8px 100%, 0 calc(100% - 8px));
}
.side.on { background: #fff; }
.side.on + .side { background: linear-gradient(225deg, #fff 7px, #ebebeb 8px); }
.side svg { width: 16px; height: 16px; flex: none; }
.tall .side { height: 42px; padding-top: 11px; }
.panel {
  flex: 1;
  width: 20px;
  margin-top: -8px;
  overflow: hidden;
  background: #b7b7b7;
  clip-path: polygon(0 0, 20px 20px, 20px 100%, 0 100%);
}
.thumb { display: block; width: 1px; height: 88px; margin-top: 24px; background: #fff; box-shadow: 1px 0 1px #000, 0 0 18px 4px #333; }
.grip-h { flex: none; width: 17px; height: 13px; background: repeating-linear-gradient(90deg, #777 0 2px, transparent 2px 4px) 0 5px / 17px 2px no-repeat; }
.grip-v { position: absolute; right: 5px; top: 294px; width: 2px; height: 18px; background: repeating-linear-gradient(#777 0 2px, transparent 2px 4px); }

/* Editor */
.editor { flex: 1; min-width: 0; display: flex; flex-direction: column; }
.toolbox { flex: none; display: flex; border: 1px solid #333; border-right: 0; background: #f4f4f4; }
.toolrows { flex: 1; padding-left: 1px; }
.props { height: 27px; }
.toolname { width: 78px; padding-left: 3px; }
.preview { width: 36px; border-left: 1px solid #b5b5b5; background: #fff; }
.preview svg { width: 100%; display: block; }
.canvas { position: relative; flex: 1; min-height: 0; display: flex; padding: 0 56px; background: #333; }
.page { flex: 1; position: relative; overflow: hidden; background: #fff; border: solid #cb4231; border-width: 0 4px; }
.ink { position: absolute; left: 27px; top: -2px; width: 450px; height: 190px; }
.spot { fill: rgba(255, 255, 0, .36); }
.touch { position: absolute; right: 8px; bottom: 25px; width: 48px; height: 50px; display: grid; place-items: center; border: 2px solid #943c35; border-left: 0; background: #999; }
.touch svg { width: 24px; height: 24px; }

/* Status bar */
.status { flex: none; height: 26px; display: flex; justify-content: space-between; align-items: center; border-top: 1px solid #333; }
.state { width: 76px; padding-left: 3px; border-right: 1px solid #fff; }
.pager { display: flex; align-items: center; padding: 0 2px; }
.pageno { width: 36px; height: 22px; margin: 0 1px; padding: 0; text-align: center; border: 1px solid #c4c4c4; background: #fff; }
.views { display: flex; width: 77px; overflow: hidden; border-left: 1px solid #fff; }

/* Taskbar */
.taskbar {
  flex: none;
  height: 28px;
  overflow: hidden;
  border-top: 1px solid #111;
  background: linear-gradient(#8a8784 1px, #211d1b 2px, #171412 40px);
  color: #fff;
  font-family: "Open Sans", "Noto Sans", sans-serif;
}
.bar { height: 40px; display: flex; align-items: center; }
.launch { flex: none; width: 62px; display: grid; place-items: center; }
.launch svg { width: 32px; height: 32px; }
.orb { width: 54px; padding-right: 8px; }
.orb svg { width: 38px; height: 38px; }
.tasks { display: flex; gap: 3px; padding-left: 2px; height: 100%; }
.task {
  width: 159px;
  height: 40px;
  display: flex;
  align-items: center;
  gap: 4px;
  padding-left: 8px;
  white-space: nowrap;
  border: 1px solid #888;
  border-radius: 3px;
  background: linear-gradient(170deg, #777 0, #4c4b4a 35%, #2c2a29 45%, #353332);
}
.task.current { background: linear-gradient(170deg, #c2c2c2 0, #8f8f8f 35%, #696969 45%, #777); }
.task svg { width: 32px; height: 32px; flex: none; }
.green { background: #5ea90b; border-radius: 3px; }
.coral { background: #fa5b48; border-radius: 3px; }
.tray { flex: 1; display: flex; align-items: center; justify-content: flex-end; height: 40px; }
.up { width: 8px; height: 5px; margin: 0 17px 0 16px; }
.signal { width: 16px; height: 12px; margin-right: 14px; }
.clock { width: 56px; text-align: center; margin-right: 8px; line-height: 16px; }
.desk { width: 6px; height: 40px; border: 1px solid #999; border-right: 0; background: #444; }
```
